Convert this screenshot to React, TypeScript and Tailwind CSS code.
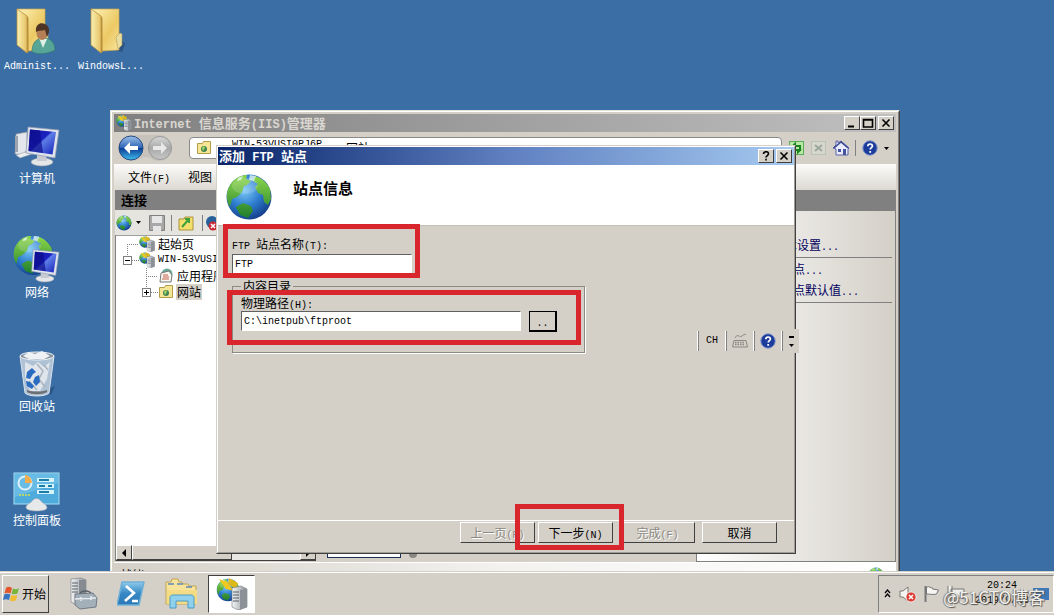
import React from "react";

const CJK = "font-['Noto_Sans_CJK_SC',sans-serif]";
const LATIN = "font-['Liberation_Mono',monospace]";
const RAISED = "border border-t-white border-l-white border-r-[#404040] border-b-[#404040] bg-[#d4d0c8]";
const SUNKEN = "border border-t-[#606060] border-l-[#606060] border-r-white border-b-white bg-white";

function T({ children, big = false }: { children: string; big?: boolean }) {
  const parts = children.split(/([\x20-\x7e]+)/).filter(Boolean);
  return (
    <>
      {parts.map((p, i) =>
        /^[\x20-\x7e]+$/.test(p) ? (
          <span key={i} className={`${LATIN} whitespace-pre leading-none ${big ? "text-[12px]" : "text-[10px]"}`}>{p}</span>
        ) : (
          <span key={i}>{p}</span>
        )
      )}
    </>
  );
}

function Gradients() {
  return (
    <svg width="0" height="0" className="absolute" aria-hidden="true">
      <defs>
        <linearGradient id="fold" x1="0" y1="0" x2="1" y2="1">
          <stop offset="0" stopColor="#fdf3b8" /><stop offset="0.6" stopColor="#ecc964" /><stop offset="1" stopColor="#f7e49c" />
        </linearGradient>
        <linearGradient id="foldFront" x1="0" y1="0" x2="1" y2="0">
          <stop offset="0" stopColor="#fbf0b4" /><stop offset="1" stopColor="#e5c162" />
        </linearGradient>
        <linearGradient id="screen" x1="0" y1="0" x2="1" y2="1">
          <stop offset="0" stopColor="#1313a0" /><stop offset="0.45" stopColor="#1a22c0" /><stop offset="0.5" stopColor="#5f7ee8" /><stop offset="1" stopColor="#1420b8" />
        </linearGradient>
        <radialGradient id="sea" cx="0.4" cy="0.35" r="0.7">
          <stop offset="0" stopColor="#7cc8f4" /><stop offset="0.5" stopColor="#2f7fd0" /><stop offset="1" stopColor="#123a86" />
        </radialGradient>
        <linearGradient id="land" x1="0" y1="0" x2="0" y2="1">
          <stop offset="0" stopColor="#8fd84a" /><stop offset="1" stopColor="#1e7d2c" />
        </linearGradient>
        <linearGradient id="metal" x1="0" y1="0" x2="1" y2="0">
          <stop offset="0" stopColor="#f4f5f6" /><stop offset="1" stopColor="#8b9096" />
        </linearGradient>
        <linearGradient id="bluebtn" x1="0" y1="0" x2="0" y2="1">
          <stop offset="0" stopColor="#9fc4ea" /><stop offset="0.48" stopColor="#2f66b8" /><stop offset="0.52" stopColor="#0c3d94" /><stop offset="1" stopColor="#3fc0f0" />
        </linearGradient>
        <linearGradient id="greybtn" x1="0" y1="0" x2="0" y2="1">
          <stop offset="0" stopColor="#d8d8d8" /><stop offset="0.5" stopColor="#a8a8a8" /><stop offset="1" stopColor="#c8c8c8" />
        </linearGradient>
        <linearGradient id="ps" x1="0" y1="0" x2="0" y2="1">
          <stop offset="0" stopColor="#8fcaea" /><stop offset="0.5" stopColor="#3588c4" /><stop offset="1" stopColor="#2c78b8" />
        </linearGradient>
      </defs>
    </svg>
  );
}

function GlobeShape() {
  return (
    <g>
      <circle cx="24" cy="24" r="22.5" fill="url(#sea)" />
      <path d="M4 14C8 6 15 2 22 2l-1 4 5 2-4 4-3 1-2 6-5 5-5 2-2 8C1 28 1 20 4 14zM30 3c7 2 12 7 15 13l1 10-3 6-4-3-1-7-5-2-3-6 3-3-5-3zM11 34l7-4 8 3 2 5-5 7-8-3z" fill="url(#land)" />
      <path d="M25 2l6 1-2 5-5-1zM13 5l5-2-2 4-4 1z" fill="#e4f6ee" opacity="0.8" />
      <ellipse cx="20" cy="13" rx="13" ry="8" fill="#ffffff" opacity="0.16" />
    </g>
  );
}

function Globe({ className }: { className: string }) {
  return <svg viewBox="0 0 48 48" className={className}><GlobeShape /></svg>;
}

function FolderIcon({ user = false }: { user?: boolean }) {
  return (
    <svg width="44" height="48" viewBox="6 0 44 48">
      <path d="M30 42l9 2 3-8-5-6z" fill="#1c3c64" opacity="0.5" />
      <path d="M8 1h28v41l-17 1z" fill="url(#fold)" stroke="#c7a650" strokeWidth="0.7" />
      <path d="M33 29l4-4 2 1v11l-4 4z" fill="#e9dda0" stroke="#b39b55" strokeWidth="0.6" />
      <path d="M8 1l10 7v37L8 37z" fill="url(#foldFront)" stroke="#b99240" strokeWidth="0.8" />
      <path d="M18 8l1.500 2v34l-1.500 1z" fill="#b88f3a" />
      {user && (
        <g transform="translate(3 1)">
          <path d="M20 43c0-10 5-14 12-14s11 5 11 12c-6 4-17 5-23 2z" fill="#57a597" stroke="#2e7466" strokeWidth="0.6" />
          <path d="M27 29l4 10 4-9z" fill="#dff0e6" />
          <ellipse cx="30" cy="24" rx="5.500" ry="7" fill="#b57e55" />
          <path d="M24 23c-1-8 5-10 9-8 5 2 5 8 2 13l-2-7c-4 1-6 0-9 2z" fill="#4d3424" />
        </g>
      )}
    </svg>
  );
}

function Monitor() {
  return (
    <g>
      <ellipse cx="30" cy="37" rx="11" ry="4" fill="#e4e6e8" stroke="#9aa0a8" strokeWidth="0.6" />
      <path d="M25 30h9l1 6H25z" fill="#c8ccd2" />
      <path d="M16 2l31 3-4 28-29-5z" fill="#dfe3ec" stroke="#8f98ac" strokeWidth="0.7" />
      <path d="M18 4.500l26 2.500-3.500 22.500L16.500 26z" fill="url(#screen)" />
      <path d="M18 4.500l10 1 3 22.500-14.500-2z" fill="#0d0d8c" opacity="0.7" />
    </g>
  );
}

function ComputerIcon() {
  return (
    <svg width="48" height="44" viewBox="1 2 48 44">
      <path d="M4 10l11-2v18l-4 5-8-1z" fill="#e3e6ea" stroke="#8a92a0" strokeWidth="0.7" />
      <path d="M3 12h3v16H3z" fill="#9da4b0" />
      <path d="M4 31l13-4 6 2-15 5z" fill="#eceff2" stroke="#9aa0a8" strokeWidth="0.6" />
      <g transform="translate(0 1)"><Monitor /></g>
    </svg>
  );
}

function NetworkIcon() {
  return (
    <svg width="48" height="48" viewBox="1 2 48 48">
      <g transform="scale(0.88)"><GlobeShape /></g>
      <g transform="translate(8 14) scale(0.83)"><Monitor /></g>
    </svg>
  );
}

function BinIcon() {
  return (
    <svg width="40" height="48" viewBox="0 0 40 48">
      <path d="M30 40l8-4-4 9z" fill="#1b3c66" opacity="0.5" />
      <path d="M3 6h34l-5 37c-4 4-20 4-24 0z" fill="#b9cada" opacity="0.92" stroke="#e8eef4" />
      <path d="M8 12l8 4 5-4 6 5 6-5-3 17-7 12H13L8 27z" fill="#dfe5ea" />
      <path d="M20 14l6 7-4 8 6 8M12 31l8 9M27 15l4 5" stroke="#a8b3bd" fill="none" strokeWidth="1.500" />
      <ellipse cx="20" cy="6" rx="17" ry="4" fill="#8795a3" stroke="#f2f5f8" />
      <path d="M6 6l6-4 6 2 7-3 8 5-6 3H12z" fill="#eef2f4" />
      <path d="M10 22l5-4 4 4-3 2-3 5-4-1zM9 31l4 1 4 4-2 3-5-3zM18 27l4-2 1 7-4 4-3-4z" fill="#2a6cc0" />
      <path d="M10 42c5 3 15 3 20 0v-2c-6 2-14 2-20 0z" fill="#6d6f70" />
    </svg>
  );
}

function ControlPanelIcon() {
  return (
    <svg width="48" height="40" viewBox="1 2 48 40">
      <rect x="2" y="3" width="45" height="31" fill="#4fabdc" stroke="#a9ddf4" />
      <path d="M3 4h43v9L3 27z" fill="#79c6ea" opacity="0.6" />
      <circle cx="13" cy="13" r="6.500" fill="none" stroke="#dff1fa" strokeWidth="2" />
      <path d="M13 13V5a8 8 0 0 1 7 8z" fill="#f0ad4b" />
      <path d="M7 25h12" stroke="#b4d66a" strokeWidth="2" strokeDasharray="2 1" />
      <path d="M25 10h17M25 16h17M25 22h17" stroke="#d6f2fb" strokeWidth="4" />
      <path d="M27 10h10M27 16h6M36 16h4M27 22h10" stroke="#197da6" strokeWidth="2" />
      <path d="M14 38c0-4 4-4 7-8 2-2 5-2 7 0 3 4 7 4 7 8s-20 4-21 0z" fill="#e6e8ea" stroke="#9ba3aa" strokeWidth="0.6" />
    </svg>
  );
}

function IisIcon({ className = "size-4" }: { className?: string }) {
  return (
    <svg viewBox="0 0 32 32" className={className}>
      <g transform="scale(0.5)"><GlobeShape /></g>
      <path d="M3 1l8 3 7 9-8-2z" fill="#f2c81f" />
      <path d="M13 0l9 5-2 6-8-5z" fill="#e8b812" opacity="0.9" />
      <path d="M16 10l9-2 6 3v18l-9 3-6-3z" fill="url(#metal)" stroke="#6f757b" strokeWidth="0.6" />
      <path d="M24 12l7-1v18l-7 3z" fill="#8c9197" />
      <path d="M17 14h6M17 17h6M17 20h6M17 23h6" stroke="#596169" />
    </svg>
  );
}

function SiteFolder() {
  return (
    <svg viewBox="0 0 16 16" className="size-4">
      <path d="M1.500 3.500h5l1-2h7v12h-13z" fill="#f6e595" stroke="#b39d48" />
      <circle cx="8" cy="9" r="3" fill="#3e8454" /><path d="M6 8l2-2 1 2-2 3z" fill="#a8d560" />
    </svg>
  );
}

function Help() {
  return (
    <svg viewBox="0 0 16 16" className="size-4">
      <circle cx="8" cy="8" r="7.200" fill="#1c3c9c" stroke="#7f93c8" />
      <path d="M5.800 6.300c0-3 4.600-3 4.600-.3C10.400 7.700 8.200 7.600 8.200 9.600" stroke="#fff" strokeWidth="1.700" fill="none" /><rect x="7.300" y="11" width="1.800" height="1.800" fill="#fff" />
    </svg>
  );
}

function Down() {
  return <svg width="5" height="3" viewBox="0 0 5 3"><path d="M0 0h5L2.500 3z" /></svg>;
}

function WinButton({ kind, label }: { kind: "min" | "max" | "close" | "help"; label: string }) {
  return (
    <button aria-label={label} className={`flex h-[14px] w-4 items-center justify-center ${RAISED}`}>
      <svg width="12" height="10" viewBox="0 0 12 10" fill="none" stroke="#000" strokeWidth="1.600">
        {kind === "min" && <path d="M2 8.500h6" strokeWidth="2" />}
        {kind === "max" && <path d="M1.500 1.500h9v7.500h-9zM1 2h10" />}
        {kind === "close" && <path d="M2.500 1.500l7 7M9.500 1.500l-7 7" />}
        {kind === "help" && <path d="M3.500 3c0-3 5-3 5-.2C8.500 4.600 6 4.500 6 6.500M6 7.800v1.800" />}
      </svg>
    </button>
  );
}

function DesktopIcon({ label, children }: { label: string; children: React.ReactNode }) {
  return (
    <button className="flex h-16 w-[74px] flex-col items-center justify-end whitespace-nowrap text-white">
      {children}
      <span className="h-4 text-[12px] leading-4"><T>{label}</T></span>
    </button>
  );
}

function Bar() {
  return <span className="h-4 w-px bg-[#808080]" />;
}

function NavBar() {
  return (
    <div className="flex h-8 items-center pl-[3px]">
      <svg width="60" height="30" viewBox="0 0 60 30">
        <path d="M14 2h28a13 13 0 0 1 13 13 13 13 0 0 1-13 13c-6 0-8-4-13-4s-9 4-15 4A13 13 0 0 1 14 2z" fill="#b9b6af" opacity="0.5" />
        <circle cx="14" cy="15" r="12" fill="url(#bluebtn)" stroke="#274a80" />
        <path d="M7 15l6-6v4h8v4h-8v4z" fill="#fff" />
        <circle cx="43" cy="15" r="11.500" fill="url(#greybtn)" stroke="#999" />
        <path d="M50 15l-6-6v4h-8v4h8v4z" fill="#e8e8e8" />
      </svg>
      <div className="ml-3 flex h-[22px] flex-1 items-center rounded-sm border border-[#8a8a8a] bg-white pl-1.5 text-[12px] leading-4">
        <SiteFolder />
        <span className="ml-5 flex self-start pt-0.5"><T>WIN-53VUSI0PJ6P</T></span>
        <span className="ml-6">网站</span>
      </div>
      <div className="flex items-center gap-1.5 px-[7px]">
        <svg viewBox="0 0 16 16" className="size-4"><rect x="0.500" y="1.500" width="14" height="13" fill="#b8e8a8" stroke="#5cae54" /><path d="M3 7l3-3v2h5v5M12 9l-3 3v-2H4" stroke="#16831c" strokeWidth="2" fill="none" /></svg>
        <svg viewBox="0 0 16 16" className="size-4"><rect x="0.500" y="1.500" width="14" height="13" fill="#d6d8ce" stroke="#bcc1b6" /><path d="M4 5l7 6M11 5l-7 6" stroke="#9ea79c" strokeWidth="2" /></svg>
        <svg viewBox="0 0 16 16" className="size-4"><path d="M0 8l3-3V1h2v2l3-2 8 7-1 1v6H3V9z" fill="#e9edff" stroke="#5863a8" /><path d="M1 8l7-6 7 6" stroke="#3f4890" fill="none" strokeWidth="1.500" /><path d="M5 9h3v3H5zM10 9h3v6h-3z" fill="#4654a0" /></svg>
        <Bar />
        <Help />
        <Down />
      </div>
    </div>
  );
}

function Tree() {
  const line = { stroke: "#808080", strokeDasharray: "1 1", fill: "none", shapeRendering: "crispEdges" as const };
  return (
    <ul className="flex-1 overflow-hidden whitespace-nowrap border-t border-[#a0a0a0] bg-white text-[12px] leading-4">
      <li className="flex h-4 items-center">
        <svg width="23" height="16"><path d="M11.500 8v8M11 8.500h12" {...line} /></svg>
        <IisIcon /><span className="ml-[3px]">起始页</span>
      </li>
      <li className="flex h-4 items-center">
        <svg width="23" height="16"><path d="M11.500 0v4M16 8.500h7" {...line} /><rect x="7.500" y="4.500" width="8" height="8" fill="#fff" stroke="#808080" /><path d="M9 8.500h5" stroke="#000" /></svg>
        <IisIcon /><span className="ml-[3px] flex items-center"><T>WIN-53VUSI0PJ6P</T></span>
      </li>
      <li className="flex h-4 items-center">
        <svg width="42" height="16"><path d="M30.500 0v16M30 8.500h12" {...line} /></svg>
        <svg viewBox="0 0 16 16" className="size-4"><circle cx="9" cy="6" r="5.500" fill="#68aa9b" /><path d="M3 5l8-2 3 4-1 7H2z" fill="#f7f6f0" stroke="#777" /><path d="M5 7h5M5 9h6M4 11h7" stroke="#c65e4d" /></svg>
        <span className="ml-[3px]">应用程序池</span>
      </li>
      <li className="flex h-4 items-center">
        <svg width="42" height="16"><path d="M30.500 0v4M35 8.500h7" {...line} /><rect x="26.500" y="4.500" width="8" height="8" fill="#fff" stroke="#808080" /><path d="M28 8.500h5M30.500 6v5" stroke="#000" /></svg>
        <SiteFolder /><span className="ml-0.5 bg-[#d4d0c8] px-px">网站</span>
      </li>
    </ul>
  );
}

function IisWindow() {
  return (
    <section className="absolute top-[110px] left-[110px] flex h-[478px] w-[790px] flex-col border border-t-[#e4e2dd] border-r-[#404040] border-b-[#404040] border-l-[#e4e2dd] bg-[#d4d0c8]">
      <div className="flex flex-1 flex-col border border-t-white border-r-[#808080] border-l-white p-0.5">
        <header className="flex h-[18px] items-center bg-linear-to-r from-[#808080] to-[#c0c0c0] px-0.5 text-[13px] leading-4 font-bold text-[#d9d6cf]">
          <IisIcon />
          <h1 className="ml-0.5 flex-1"><T big>Internet 信息服务(IIS)管理器</T></h1>
          <WinButton kind="min" label="最小化" /><WinButton kind="max" label="最大化" />
          <span className="w-0.5" /><WinButton kind="close" label="关闭" />
        </header>
        <NavBar />
        <nav className="flex h-[26px] items-center gap-[18px] bg-linear-to-b from-[#fcfbf9] to-[#dcd9d2] pl-[14px] text-[12px] leading-4">
          <button><T>文件(F)</T></button><button>视图</button>
        </nav>
        <div className="flex min-h-0 flex-1">
          <aside className="flex w-[202px] flex-col pb-px pl-px">
            <h2 className="h-5 bg-[#808080] pl-1.5 text-[13px] leading-5 font-bold">连接</h2>
            <div className="flex h-[25px] items-center bg-[#e6e4df] pl-px">
              <Globe className="size-4" /><span className="ml-1 flex items-center"><Down /></span>
              <svg viewBox="0 0 16 16" className="ml-2 size-4"><path d="M.5.500h15v15H.5z" fill="#a8a8a8" stroke="#808080" /><path d="M3 1h10v7H3zM4 11h8v5H4z" fill="#e6e6e6" /></svg>
              <span className="mx-1.5 flex"><Bar /></span>
              <svg viewBox="0 0 16 16" className="size-4"><path d="M1 4h5l1-2h8v13H1z" fill="#f4df6c" stroke="#ab943c" /><path d="M4 12l7-8M7 4h4v4" stroke="#3da03a" strokeWidth="2" fill="none" /></svg>
              <span className="mr-0.5 ml-2 flex"><Bar /></span>
              <svg viewBox="0 0 16 16" className="size-4"><circle cx="7" cy="7" r="6" fill="#27619c" /><circle cx="8" cy="11" r="4.500" fill="#c92c35" /><path d="M6 9l4 4M10 9l-4 4" stroke="#fff" strokeWidth="1.500" /></svg>
            </div>
            <div className="flex min-h-0 flex-1 flex-col border-l border-[#808080]">
              <Tree />
              <div className="flex h-4 border-b border-[#404040]">
                <button aria-label="向左滚动" className={`flex w-4 items-center justify-center ${RAISED}`}><svg width="4" height="8"><path d="M4 0v8L0 4z" /></svg></button>
                <span className={`w-[100px] ${RAISED}`} />
                <span className="flex-1 bg-[#e9e7e3]" />
                <button aria-label="向右滚动" className={`flex w-4 items-center justify-center ${RAISED}`}><svg width="4" height="8"><path d="M0 0v8l4-4z" /></svg></button>
              </div>
            </div>
          </aside>
          <main className="flex flex-1 items-end pb-1 pl-[11px]">
            <span className="h-5 w-[74px] border border-[#1d3354] bg-white" />
            <span className="ml-2 h-5 w-2 rounded-b-full bg-[#8a8680]" />
          </main>
          <aside className="flex w-[200px] flex-col">
            <h2 className="h-5 bg-[#808080]" />
            <div className="flex-1 border border-[#808080] bg-linear-to-r from-white to-[#d4d0c8] pr-[3px] text-[12px] leading-4 whitespace-nowrap text-[#00005c]">
              <div className="flex h-[47px] items-end border-b border-[#808080] pb-1 pl-[76px]"><a href="#basic"><T>基本设置...</T></a></div>
              <div className="flex h-[45px] flex-col justify-end gap-[5px] border-b border-[#808080] pb-1 pl-[30px]">
                <a href="#add"><T>添加 FTP 站点...</T></a>
                <a href="#defaults"><T>设置 FTP 站点默认值...</T></a>
              </div>
            </div>
          </aside>
        </div>
        <footer className="flex h-[22px] items-start justify-between border-t border-white bg-linear-to-r from-[#d4d0c8] via-[#f3f2ef] to-white pt-1 pr-3 pl-1.5 text-[12px] leading-4">
          <span>就绪</span><Globe className="size-4" />
        </footer>
      </div>
    </section>
  );
}

function DialogButton({ children, disabled = false }: { children: string; disabled?: boolean }) {
  return (
    <button disabled={disabled} className={`h-[21px] w-[75px] text-[12px] leading-4 ${RAISED} disabled:text-[#8c8982] disabled:[text-shadow:1px_1px_0_#fff]`}>
      <T>{children}</T>
    </button>
  );
}

function FtpDialog() {
  return (
    <section role="dialog" aria-label="添加 FTP 站点" className="absolute top-[145px] left-[216px] flex h-[409px] w-[580px] flex-col border border-t-[#d4d0c8] border-r-[#404040] border-b-[#404040] border-l-[#d4d0c8] bg-[#d4d0c8]">
      <div className="flex flex-1 flex-col border border-t-white border-l-white border-r-[#a09d96] border-b-[#a09d96]">
        <header className="flex h-[18px] items-center bg-linear-to-r from-[#0a246a] via-[#5f7fc0] to-[#a6caf0] pr-0.5 pl-px text-[13px] leading-4 font-bold text-white">
          <h1 className="flex-1"><T big>添加 FTP 站点</T></h1>
          <WinButton kind="help" label="帮助" /><span className="w-0.5" /><WinButton kind="close" label="关闭对话框" />
        </header>
        <div className="flex h-[60px] items-start bg-white pt-2 pl-[7px]">
          <Globe className="size-12" />
          <h2 className="ml-5 pt-[5px] text-[15px] leading-5 font-bold">站点信息</h2>
        </div>
        <form className="flex flex-1 flex-col items-start border-t border-[#c2beb5] pt-[9px] pl-[14px] text-[12px]">
          <label htmlFor="site" className="h-[18px] leading-[18px]"><T>FTP 站点名称(T):</T></label>
          <input id="site" defaultValue="FTP" className={`mt-px h-5 w-[180px] px-0.5 text-[10px] outline-none ${LATIN} ${SUNKEN}`} />
          <fieldset className="mt-1 h-[75px] w-[353px] border border-[#8d8a83] pl-2 shadow-[1px_1px_0_#fff]">
            <legend className="px-0.5 leading-4">内容目录</legend>
            <label htmlFor="path" className="block h-[17px] leading-[18px]"><T>物理路径(H):</T></label>
            <div className="flex gap-2">
              <input id="path" defaultValue="C:\inetpub\ftproot" className={`h-5 w-[280px] px-0.5 text-[10px] outline-none ${LATIN} ${SUNKEN}`} />
              <button type="button" aria-label="浏览" className="h-[21px] w-7 border border-r-2 border-b-2 border-black bg-[#d4d0c8] leading-4"><T>..</T></button>
            </div>
          </fieldset>
        </form>
        <footer className="flex h-8 items-start justify-end border-t border-white pt-px pr-[17px]">
          <DialogButton disabled>上一页(P)</DialogButton>
          <span className="w-[3px]" />
          <DialogButton>下一步(N)</DialogButton>
          <span className="w-[7px]" />
          <DialogButton disabled>完成(F)</DialogButton>
          <span className="w-[7px]" />
          <DialogButton>取消</DialogButton>
        </footer>
      </div>
    </section>
  );
}

function LanguageBar() {
  return (
    <div className="absolute top-[329px] left-[697px] flex h-6 w-[102px] items-center bg-[#d4d0c8] text-[12px] leading-4">
      <span className="h-5 w-0.5 border-r border-[#808080] bg-white" />
      <button className="flex w-[26px] justify-center"><T>CH</T></button>
      <span className="h-5 w-0.5 border-r border-[#808080] bg-white" />
      <button aria-label="键盘" className="flex w-[26px] justify-center">
        <svg width="18" height="18" viewBox="0 0 18 18" fill="none" stroke="#8b8983"><path d="M3 8.500h12l1.500 6.500h-15zM4 6c2-5 5 0 7-2s2-1 4-2" /><path d="M4 10.500h10M4 12.500h10" strokeDasharray="1.500 1" strokeWidth="1.400" /></svg>
      </button>
      <span className="h-5 w-0.5 border-r border-[#808080] bg-white" />
      <button aria-label="语言帮助" className="flex w-[26px] justify-center"><Help /></button>
      <span className="h-5 w-0.5 border-r border-[#808080] bg-white" />
      <button aria-label="选项" className="ml-1.5 flex flex-col items-center gap-1.5"><span className="h-0.5 w-[5px] bg-black" /><Down /></button>
    </div>
  );
}

function Taskbar() {
  return (
    <footer className="relative flex h-11 shrink-0 items-center border-t border-[#d4d0c8] bg-[#d4d0c8] shadow-[inset_0_1px_0_#fff]">
      <button className={`ml-0.5 flex h-[38px] w-[47px] items-center gap-px text-[12px] ${RAISED}`}>
        <svg width="18" height="18" viewBox="0 0 18 18">
          <path d="M3 3c2-2 4-1 6 0L7.500 8.500c-2-1-4-1-6 0z" fill="#e4572b" /><path d="M10 3.500c2 1 4 1 6-.5L14.500 8.500c-2 1-4 1-6 .3z" fill="#78b53c" />
          <path d="M1.300 9.500c2-1 4-1 6 0L6 15c-2-1-4-1-6 0z" fill="#3875c0" /><path d="M8.300 10c2 1 4 1 6 0L13 15c-2 1.500-4 1.500-6 .3z" fill="#f3bc2e" />
        </svg>
        开始
      </button>
      <nav className="ml-3 flex items-center">
        <button aria-label="服务器管理器" className="flex w-[50px] pl-1.5">
          <svg width="32" height="34" viewBox="0 0 32 34">
            <path d="M4 2l10-1 5 2v22l-9 3-6-3z" fill="url(#metal)" stroke="#71777c" strokeWidth="0.600" /><path d="M12 3l7 0v22l-7 2z" fill="#858b91" />
            <path d="M5 6h6M5 9h6M5 12h6M5 15h6" stroke="#596169" />
            <path d="M13 17c1-4 10-4 11 0" fill="none" stroke="#596169" strokeWidth="1.500" />
            <path d="M8 17l18-1 4 5-1 9-16 2-5-4z" fill="#a3afb9" stroke="#5f6b75" strokeWidth="0.800" /><path d="M8 22l21-1M14 20v4M24 19v4" stroke="#e6ebef" strokeWidth="1.500" />
          </svg>
        </button>
        <button aria-label="PowerShell" className="flex w-[50px] pl-1.5">
          <svg width="32" height="32" viewBox="2 0 32 32"><path d="M7 4h22l-5 23H2z" fill="url(#ps)" stroke="#6fb0d8" strokeWidth="1.500" strokeLinejoin="round" /><path d="M11 8l8 7-9 8M17 23h6" stroke="#fff" strokeWidth="2.600" fill="none" /></svg>
        </button>
        <button aria-label="资源管理器" className="flex w-[47px] pl-1">
          <svg width="34" height="34" viewBox="0 0 34 34"><path d="M1 5h5l1-3h6l1 3h3l1 2h5l1 2h7v18H1z" fill="#f7e49a" stroke="#c0a553" /><path d="M2 13h30v14H2z" fill="#f3dc84" /><path d="M3 7h6M12 7h6M21 10h6" stroke="#5d86b8" strokeWidth="1.500" /><path d="M5 31V21c0-2 1-3 3-3h18c2 0 3 1 3 3v10h-6v-7H11v7z" fill="#8fd0ec" stroke="#4b9cc6" /></svg>
        </button>
        <button aria-label="IIS 管理器" className="flex h-[38px] w-[47px] items-center justify-center border border-t-[#404040] border-l-[#404040] border-r-white border-b-white bg-white"><IisIcon className="size-8" /></button>
      </nav>
      <div className="ml-auto flex h-[38px] items-center border border-t-[#808080] border-l-[#808080] border-r-white border-b-white pr-1 pl-[5px]">
        <svg width="7" height="9" viewBox="0 0 7 9" fill="none" stroke="#000" strokeWidth="1.300"><path d="M1 4l2.500-3L6 4M1 8l2.500-3L6 8" /></svg>
        <svg width="18" height="18" viewBox="0 0 18 18" className="ml-2"><path d="M1 6h3l5-4v14l-5-4H1z" fill="#f5f5f2" stroke="#7c7a75" /><circle cx="12" cy="12" r="5" fill="#d83c32" stroke="#fff" strokeWidth="0.700" /><path d="M10 10l4 4M14 10l-4 4" stroke="#fff" strokeWidth="1.500" /></svg>
        <svg width="18" height="18" viewBox="0 0 18 18" className="ml-1.5"><path d="M2.500 1v16" stroke="#777" strokeWidth="2" /><path d="M3.500 2c3-1 4 1 6 1v1l6 1-2 4c-3 1-7 0-10 0z" fill="#f5f5f2" stroke="#777" /></svg>
        <svg width="18" height="18" viewBox="0 0 18 18" className="ml-1.5"><path d="M4 4h13v9H4zM1 1v7h4V1M3 8v7h8" fill="#eeeeea" stroke="#777" /></svg>
        <time className="ml-1.5 flex w-[62px] flex-col items-center gap-[5px]"><T>20:24</T><T>2019/9/28</T></time>
        <span className="h-3 w-4 bg-[#3f78b7]" />
      </div>
      <span className="absolute right-[9px] bottom-2 text-[17px] leading-5 text-[#f1efeb] [text-shadow:1px_1px_1px_#55524e,-1px_0_1px_#77746f]">@51CTO博客</span>
    </footer>
  );
}

export default function App() {
  return (
    <div className={`flex h-screen flex-col overflow-hidden bg-[#3a6ea5] text-black ${CJK}`}>
      <Gradients />
      <div className="relative min-h-0 flex-1 overflow-hidden">
        <div className="flex pt-2">
          <div className="flex flex-col gap-[50px]">
            <DesktopIcon label="Administ..."><FolderIcon user /></DesktopIcon>
            <DesktopIcon label="计算机"><ComputerIcon /></DesktopIcon>
            <DesktopIcon label="网络"><NetworkIcon /></DesktopIcon>
            <DesktopIcon label="回收站"><BinIcon /></DesktopIcon>
            <DesktopIcon label="控制面板"><ControlPanelIcon /></DesktopIcon>
          </div>
          <DesktopIcon label="WindowsL..."><FolderIcon /></DesktopIcon>
        </div>
        <IisWindow />
        <FtpDialog />
        <LanguageBar />
        <div className="pointer-events-none absolute top-[224px] left-[223px] h-[54px] w-[197px] border-[5px] border-[#d8262c]" />
        <div className="pointer-events-none absolute top-[290px] left-[227px] h-[55px] w-[354px] border-[5px] border-[#d8262c]" />
        <div className="pointer-events-none absolute top-[504px] left-[515px] h-[46px] w-[109px] border-[5px] border-[#d8262c]" />
      </div>
      <Taskbar />
    </div>
  );
}
